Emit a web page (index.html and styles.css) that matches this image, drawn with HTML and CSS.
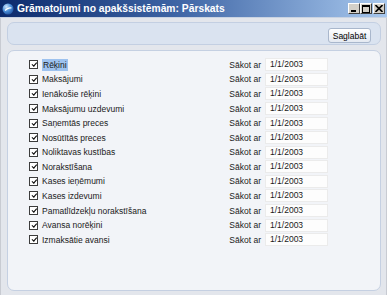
FILE: index.html
```html
<!DOCTYPE html>
<html>
<head>
<meta charset="utf-8">
<link rel="stylesheet" href="styles.css">
</head>
<body>
<div class="window">
  <div class="titlebar">
    <svg class="appicon" width="12" height="12" viewBox="0 0 12 12">
      <defs>
        <radialGradient id="g" cx="0.35" cy="0.3" r="0.8">
          <stop offset="0" stop-color="#cfe6ff"/>
          <stop offset="0.5" stop-color="#4c8fd8"/>
          <stop offset="1" stop-color="#1a4c9a"/>
        </radialGradient>
      </defs>
      <circle cx="6" cy="6" r="5.5" fill="url(#g)"/>
      <path d="M3 7.5 Q6 4 9.5 5" stroke="#ffffff" stroke-width="1.2" fill="none"/>
    </svg>
    <span class="title">Grāmatojumi no apakšsistēmām: Pārskats</span>
    <div class="wbtns">
      <span class="wbtn"><svg width="8" height="7" viewBox="0 0 8 7"><rect x="1" y="5" width="5" height="2" fill="#000"/></svg></span>
      <span class="wbtn"><svg width="8" height="8" viewBox="0 0 8 8"><rect x="0.5" y="0.5" width="7" height="7" fill="none" stroke="#000"/><rect x="0" y="0" width="8" height="2" fill="#000"/></svg></span>
      <span class="wbtn close"><svg width="8" height="7" viewBox="0 0 8 7"><path d="M0.5 0 L7.5 7 M7.5 0 L0.5 7" stroke="#000" stroke-width="1.6"/></svg></span>
    </div>
  </div>
  <div class="client">
    <div class="toolbar">
      <button class="btn">Saglabāt</button>
    </div>
    <div class="panel">
      <div class="row"><span class="cb"></span><span class="lbl"><span class="sel">Rēķini</span></span><span class="from">Sākot ar</span><span class="field">1/1/2003</span></div>
      <div class="row"><span class="cb"></span><span class="lbl">Maksājumi</span><span class="from">Sākot ar</span><span class="field">1/1/2003</span></div>
      <div class="row"><span class="cb"></span><span class="lbl">Ienākošie rēķini</span><span class="from">Sākot ar</span><span class="field">1/1/2003</span></div>
      <div class="row"><span class="cb"></span><span class="lbl">Maksājumu uzdevumi</span><span class="from">Sākot ar</span><span class="field">1/1/2003</span></div>
      <div class="row"><span class="cb"></span><span class="lbl">Saņemtās preces</span><span class="from">Sākot ar</span><span class="field">1/1/2003</span></div>
      <div class="row"><span class="cb"></span><span class="lbl">Nosūtītās preces</span><span class="from">Sākot ar</span><span class="field">1/1/2003</span></div>
      <div class="row"><span class="cb"></span><span class="lbl">Noliktavas kustības</span><span class="from">Sākot ar</span><span class="field">1/1/2003</span></div>
      <div class="row"><span class="cb"></span><span class="lbl">Norakstīšana</span><span class="from">Sākot ar</span><span class="field">1/1/2003</span></div>
      <div class="row"><span class="cb"></span><span class="lbl">Kases ieņēmumi</span><span class="from">Sākot ar</span><span class="field">1/1/2003</span></div>
      <div class="row"><span class="cb"></span><span class="lbl">Kases izdevumi</span><span class="from">Sākot ar</span><span class="field">1/1/2003</span></div>
      <div class="row"><span class="cb"></span><span class="lbl">Pamatlīdzekļu norakstīšana</span><span class="from">Sākot ar</span><span class="field">1/1/2003</span></div>
      <div class="row"><span class="cb"></span><span class="lbl">Avansa norēķini</span><span class="from">Sākot ar</span><span class="field">1/1/2003</span></div>
      <div class="row"><span class="cb"></span><span class="lbl">Izmaksātie avansi</span><span class="from">Sākot ar</span><span class="field">1/1/2003</span></div>
    </div>
  </div>
</div>
</body>
</html>
```

FILE: styles.css
```css
html, body {
  margin: 0;
  padding: 0;
  background: #e4e7ed;
}
.window {
  width: 387px;
  height: 295px;
  display: flex;
  flex-direction: column;
  background: #e3e6ec;
  font-family: "Liberation Sans", Arial, sans-serif;
  overflow: hidden;
}
.titlebar {
  height: 17px;
  flex: none;
  display: flex;
  align-items: center;
  background: linear-gradient(to right, #0c2a6c 0%, #3d64a4 45%, #a8c8ee 100%);
  border-bottom: 1px solid #c9d3e2;
  padding-left: 2px;
}
.appicon {
  flex: none;
  margin-right: 3px;
}
.title {
  color: #ffffff;
  font-weight: bold;
  font-size: 10.3px;
  white-space: nowrap;
  flex: 1;
}
.wbtns {
  display: flex;
  gap: 0;
  margin-right: 2px;
}
.wbtn {
  width: 12px;
  height: 11px;
  box-sizing: border-box;
  background: #d4d0c8;
  border-top: 1px solid #ffffff;
  border-left: 1px solid #ffffff;
  border-right: 1px solid #404040;
  border-bottom: 1px solid #404040;
  display: flex;
  align-items: center;
  justify-content: center;
}
.wbtn.close {
  margin-left: 1px;
}
.client {
  flex: 1;
  display: flex;
  flex-direction: column;
  padding: 4px 5px 4px 6px;
  gap: 5px;
  border-left: 1px solid #c8cbd2;
  border-right: 1px solid #c8cbd2;
}
.toolbar {
  height: 23px;
  flex: none;
  box-sizing: border-box;
  border: 1px solid #c3cfe2;
  border-radius: 7px;
  background: #dae3f0;
  display: flex;
  align-items: center;
  justify-content: flex-end;
  padding-right: 9px;
}
.btn {
  height: 15px;
  width: 43px;
  padding: 0;
  box-sizing: border-box;
  border: 1px solid #a9b7cc;
  border-radius: 3px;
  background: linear-gradient(#ffffff, #e4e9f1);
  font-family: "Liberation Sans", Arial, sans-serif;
  font-size: 8.5px;
  color: #000;
  margin-top: 4px;
}
.panel {
  flex: 1;
  box-sizing: border-box;
  border: 1px solid #c5d0e2;
  border-radius: 7px;
  background: #f2f4f8;
  padding: 6.5px 52px 0 21px;
  display: flex;
  flex-direction: column;
}
.row {
  height: 14.58px;
  flex: none;
  display: flex;
  align-items: center;
  font-size: 8.5px;
  color: #1a1a1a;
}
.cb {
  width: 9px;
  height: 9px;
  box-sizing: border-box;
  border: 1px solid #3c3c3c;
  background: #ffffff;
  position: relative;
  flex: none;
}
.cb::after {
  content: "";
  position: absolute;
  left: 1px;
  top: 0px;
  width: 4px;
  height: 2px;
  border-left: 1.6px solid #000;
  border-bottom: 1.6px solid #000;
  transform: rotate(-50deg) translate(-0.5px, 1.5px);
}
.lbl {
  margin-left: 4px;
  flex: 1;
  white-space: nowrap;
}
.sel {
  background: #9dc2ef;
  padding: 1px 1px;
}
.from {
  margin-right: 4px;
  white-space: nowrap;
}
.field {
  width: 63px;
  height: 13px;
  box-sizing: border-box;
  background: #fdfdfd;
  border: 1px solid #ebebeb;
  padding-left: 4px;
  line-height: 11px;
  white-space: nowrap;
}
```
